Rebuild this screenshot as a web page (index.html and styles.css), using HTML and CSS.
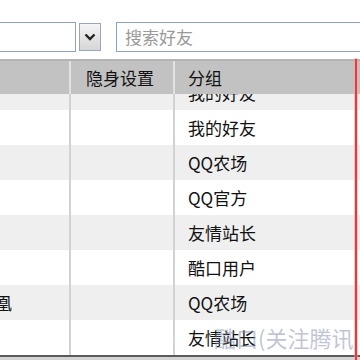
FILE: index.html
```html
<!DOCTYPE html>
<html lang="zh">
<head>
<meta charset="utf-8">
<link rel="stylesheet" href="styles.css">
</head>
<body>
<div class="page">
  <div class="toolbar">
    <div class="combo"></div>
    <div class="drop-btn">
      <svg width="12" height="8" viewBox="0 0 12 8"><path d="M1.5 1.5 L6 6 L10.5 1.5" fill="none" stroke="#222" stroke-width="2.4"/></svg>
    </div>
    <div class="search">搜索好友</div>
  </div>
  <div class="grid">
    <div class="head row">
      <div class="c1"></div>
      <div class="sep"></div>
      <div class="c2">隐身设置</div>
      <div class="sep"></div>
      <div class="c3">分组</div>
    </div>
    <div class="body">
      <div class="scroll">
        <div class="row alt"><div class="c1"></div><div class="sep"></div><div class="c2"></div><div class="sep"></div><div class="c3">我的好友</div></div>
        <div class="row"><div class="c1"></div><div class="sep"></div><div class="c2"></div><div class="sep"></div><div class="c3">我的好友</div></div>
        <div class="row alt"><div class="c1"></div><div class="sep"></div><div class="c2"></div><div class="sep"></div><div class="c3">QQ农场</div></div>
        <div class="row"><div class="c1"></div><div class="sep"></div><div class="c2"></div><div class="sep"></div><div class="c3">QQ官方</div></div>
        <div class="row alt"><div class="c1"></div><div class="sep"></div><div class="c2"></div><div class="sep"></div><div class="c3">友情站长</div></div>
        <div class="row"><div class="c1"></div><div class="sep"></div><div class="c2"></div><div class="sep"></div><div class="c3">酷口用户</div></div>
        <div class="row alt"><div class="c1 name">浴火凤凰</div><div class="sep"></div><div class="c2"></div><div class="sep"></div><div class="c3">QQ农场</div></div>
        <div class="row"><div class="c1"></div><div class="sep"></div><div class="c2"></div><div class="sep"></div><div class="c3">友情站长</div></div>
      </div>
    </div>
    <div class="foot"></div>
  </div>
  <div class="red-line"></div>
  <div class="watermark">酷口(关注腾讯</div>
</div>
</body>
</html>
```
FILE: styles.css
```css
html, body {
  margin: 0;
  padding: 0;
}
body {
  width: 360px;
  height: 360px;
  overflow: hidden;
  background: #fff;
  font-family: "Noto Sans CJK SC", "Microsoft YaHei", sans-serif;
  font-size: 17px;
  color: #111;
}
.page {
  position: relative;
  width: 360px;
  height: 360px;
  overflow: hidden;
}
.toolbar {
  height: 59px;
  display: flex;
  align-items: flex-start;
  padding-top: 22px;
  box-sizing: border-box;
}
.toolbar > div {
  flex-shrink: 0;
}
.combo {
  margin-left: -40px;
  width: 116px;
  height: 30px;
  box-sizing: border-box;
  border: 1px solid #8ea2c2;
  background: #fff;
}
.drop-btn {
  margin-left: 3px;
  margin-top: 1px;
  width: 22px;
  height: 28px;
  box-sizing: border-box;
  border: 1px solid #9aa6bc;
  background: linear-gradient(#f4f4f4, #d6d6d6);
  display: flex;
  align-items: center;
  justify-content: center;
}
.search {
  margin-left: 15px;
  width: 260px;
  height: 30px;
  box-sizing: border-box;
  border: 1px solid #8ea2c2;
  padding-left: 8px;
  line-height: 28px;
  color: #9a9a9a;
}
.grid {
  margin-left: -100px;
  border-top: 2px solid #b4b4b4;
}
.row {
  display: flex;
  height: 35px;
  background: #fff;
}
.row.alt {
  background: #efefef;
}
.head.row {
  height: 33px;
  background: #c2c2c2;
}
.c1 {
  width: 169px;
  box-sizing: border-box;
  padding-left: 44px;
  line-height: 35px;
  white-space: nowrap;
  overflow: hidden;
}
.c2 {
  width: 102px;
  box-sizing: border-box;
  padding-left: 15px;
  line-height: 35px;
}
.c3 {
  flex: 1;
  box-sizing: border-box;
  padding-left: 13px;
  line-height: 35px;
  white-space: nowrap;
}
.head .c2, .head .c3 {
  line-height: 33px;
}
.sep {
  width: 2px;
  background: #d2d2d2;
}
.head .sep {
  background: #e2e2e2;
}
.body {
  height: 261px;
  overflow: hidden;
}
.scroll {
  margin-top: -19px;
}
.foot {
  height: 2px;
  background: #5a5a5a;
  border-bottom: 3px solid #d4d4d4;
}
.red-line {
  position: absolute;
  left: 355px;
  top: 59px;
  width: 2px;
  height: 301px;
  background: #e23c3c;
  box-shadow: 0 0 0 1px rgba(255, 160, 160, 0.55);
}
.watermark {
  position: absolute;
  left: 214px;
  top: 322px;
  font-size: 22px;
  line-height: 30px;
  color: rgba(130, 140, 170, 0.5);
  white-space: nowrap;
}
```
